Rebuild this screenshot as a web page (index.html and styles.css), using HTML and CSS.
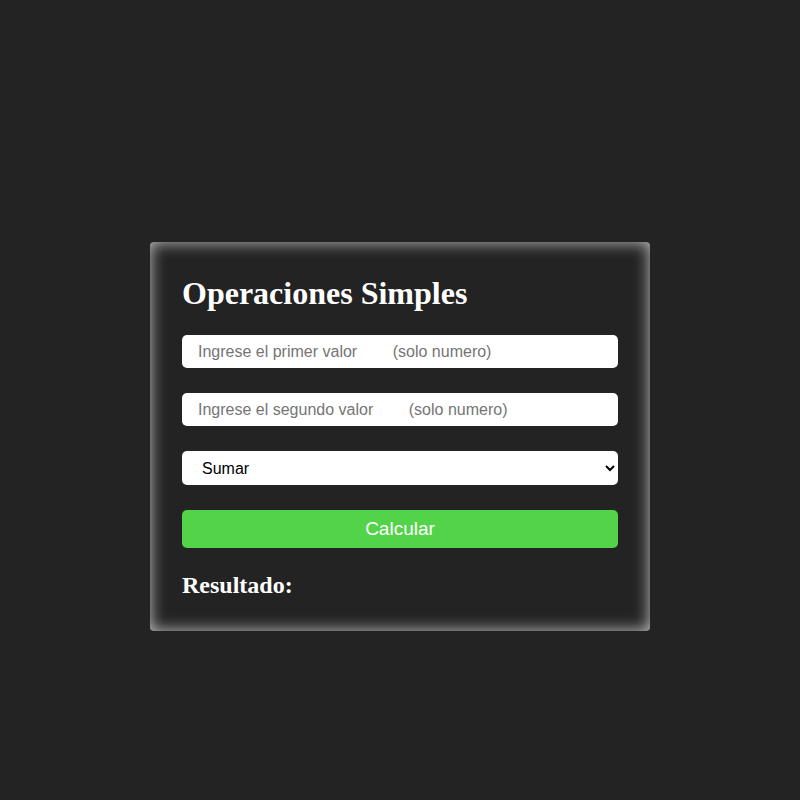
FILE: index.html
```html
<!DOCTYPE html>
<html lang="es">
<head>
<meta charset="utf-8">
<title>Operaciones Simples</title>
<link rel="stylesheet" href="styles.css">
</head>
<body>
<main class="page">
  <form class="card">
    <h1 class="title">Operaciones Simples</h1>
    <input class="field" type="text" placeholder="Ingrese el primer valor&#160;&#160;&#160;&#160;&#160;&#160;&#160;&#160;(solo numero)">
    <input class="field" type="text" placeholder="Ingrese el segundo valor&#160;&#160;&#160;&#160;&#160;&#160;&#160;&#160;(solo numero)">
    <select class="field select">
      <option>Sumar</option>
      <option>Restar</option>
      <option>Multiplicar</option>
      <option>Dividir</option>
    </select>
    <button class="btn" type="button">Calcular</button>
    <h2 class="result">Resultado:</h2>
  </form>
</main>
</body>
</html>
```
FILE: styles.css
```css
html, body {
  margin: 0;
  padding: 0;
  background: #232323;
}
.page {
  display: flex;
  justify-content: center;
  align-items: flex-start;
  padding-top: 242px;
  min-height: 800px;
  box-sizing: border-box;
}
.card {
  width: 500px;
  box-sizing: border-box;
  padding: 31px 32px 32px;
  background: #232323;
  border-radius: 4px;
  box-shadow: inset 0 0 16px rgba(255, 255, 255, 0.75);
  display: flex;
  flex-direction: column;
  gap: 25px;
}
.title {
  margin: 0 0 -3px;
  font-family: "Liberation Serif", "Times New Roman", serif;
  font-weight: bold;
  font-size: 32px;
  line-height: 40px;
  color: #ffffff;
}
.field {
  height: 33px;
  box-sizing: border-box;
  border: none;
  border-radius: 5px;
  background: #ffffff;
  padding: 0 16px;
  font-family: "Liberation Sans", Arial, sans-serif;
  font-size: 16px;
  color: #000;
  outline: none;
  margin: 0;
}
.field::placeholder {
  color: #757575;
}
.select {
  height: 34px;
  padding: 0 16px;
}
.btn {
  height: 38px;
  border: none;
  border-radius: 5px;
  background: #53d34a;
  color: #ffffff;
  font-family: "Liberation Sans", Arial, sans-serif;
  font-size: 19px;
  margin: 0;
  padding: 0;
}
.result {
  margin: -2px 0 0;
  font-family: "Liberation Serif", "Times New Roman", serif;
  font-weight: bold;
  font-size: 24px;
  line-height: 28px;
  color: #ffffff;
}
```
